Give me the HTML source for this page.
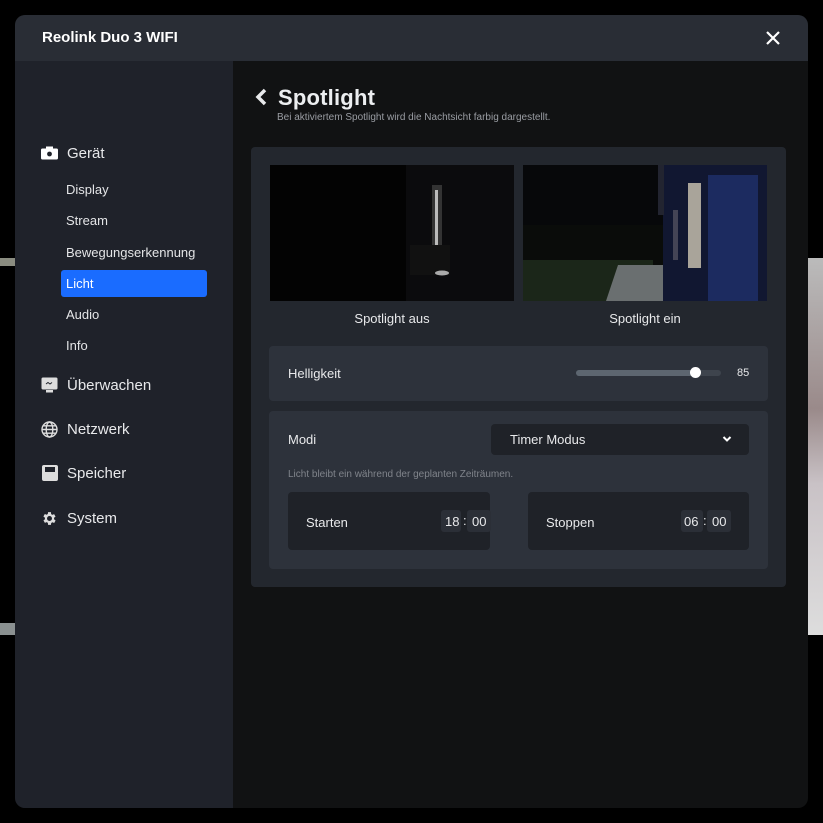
<!DOCTYPE html>
<html><head><meta charset="utf-8"><style>
*{margin:0;padding:0;box-sizing:border-box}
body{width:823px;height:823px;background:#000;font-family:"Liberation Sans",Arial,sans-serif;position:relative;overflow:hidden;color:#e8e9eb}
.abs{position:absolute}
.modal{left:15px;top:15px;width:793px;height:793px;border-radius:10px;overflow:hidden;background:#111213}
.hdr{left:0;top:0;width:793px;height:46px;background:#292d35}
.side{left:0;top:46px;width:218px;height:747px;background:#1f222a}
.t{position:absolute;white-space:nowrap}
.nav{font-size:15px;color:#e8e9eb}
.sub{font-size:13px;color:#e4e5e7}
.card{left:251px;top:147px;width:535px;height:440px;background:#23272e;border-radius:4px}
.panel{background:#2d323b;border-radius:4px;position:absolute}
.dk{background:#1f2228;border-radius:4px;position:absolute}
</style></head><body>
<div class="abs" style="left:808px;top:258px;width:15px;height:377px;background:linear-gradient(#bbb,#9a8a8a 40%,#c9c2c6 60%,#ddd)"></div>
<div class="abs" style="left:0;top:258px;width:15px;height:8px;background:#8a8c80"></div>
<div class="abs" style="left:0;top:623px;width:15px;height:12px;background:#8a9090"></div>
<div class="abs modal">
 <div class="abs hdr"></div>
 <div class="t" style="left:27px;top:14px;font-size:15px;font-weight:bold;color:#fff">Reolink Duo 3 WIFI</div>
 <svg class="abs" style="left:750px;top:15px" width="16" height="16" viewBox="0 0 16 16"><path d="M2 2L14 14M14 2L2 14" stroke="#fff" stroke-width="2.2"/></svg>
 <div class="abs side"></div>
 <svg class="abs" style="left:26px;top:131px" width="17" height="14" viewBox="0 0 17 14"><rect x="0" y="2.5" width="17" height="11" rx="1.5" fill="#fff"/><rect x="5" y="0.5" width="7" height="3" fill="#fff"/><circle cx="8.5" cy="8" r="2.4" fill="#1f222a"/></svg>
 <div class="t nav" style="left:52px;top:130px">Gerät</div>
 <div class="t sub" style="left:51px;top:167px">Display</div>
 <div class="t sub" style="left:51px;top:198px">Stream</div>
 <div class="t sub" style="left:51px;top:230px">Bewegungserkennung</div>
 <div class="abs" style="left:46px;top:255px;width:146px;height:27px;background:#1a6cff;border-radius:3px"></div>
 <div class="t sub" style="left:51px;top:261px;color:#fff">Licht</div>
 <div class="t sub" style="left:51px;top:292px">Audio</div>
 <div class="t sub" style="left:51px;top:323px">Info</div>
 <svg class="abs" style="left:26px;top:362px" width="17" height="16" viewBox="0 0 17 16"><rect x="0.5" y="0.5" width="16" height="12" rx="1.5" fill="#ddd"/><rect x="5" y="13" width="7" height="2.5" fill="#ddd"/><path d="M5 7l2-1.5 2 1.5 2-1.5" stroke="#1f222a" stroke-width="1" fill="none"/></svg>
 <div class="t nav" style="left:52px;top:362px">Überwachen</div>
 <svg class="abs" style="left:26px;top:406px" width="17" height="17" viewBox="0 0 17 17"><g stroke="#ddd" stroke-width="1.4" fill="none"><circle cx="8.5" cy="8.5" r="7.5"/><ellipse cx="8.5" cy="8.5" rx="3.3" ry="7.5"/><path d="M1 8.5h15M2.3 4.8h12.4M2.3 12.2h12.4"/></g></svg>
 <div class="t nav" style="left:52px;top:406px">Netzwerk</div>
 <svg class="abs" style="left:27px;top:450px" width="16" height="16" viewBox="0 0 16 16"><rect x="0" y="0" width="16" height="16" rx="2" fill="#ddd"/><rect x="3" y="2" width="10" height="5" fill="#1f222a"/></svg>
 <div class="t nav" style="left:52px;top:450px">Speicher</div>
 <svg class="abs" style="left:26px;top:495px" width="17" height="17" viewBox="0 0 24 24"><path fill="#ddd" d="M19.4 13a7.5 7.5 0 000-2l2.1-1.6-2-3.5-2.5 1a7.6 7.6 0 00-1.7-1L15 3h-4l-.4 2.7a7.6 7.6 0 00-1.7 1l-2.5-1-2 3.5L6.6 11a7.5 7.5 0 000 2l-2.1 1.6 2 3.5 2.5-1a7.6 7.6 0 001.7 1L11 21h4l.4-2.7a7.6 7.6 0 001.7-1l2.5 1 2-3.5zM13 15.5a3.5 3.5 0 110-7 3.5 3.5 0 010 7z" transform="translate(-1 0)"/></svg>
 <div class="t nav" style="left:52px;top:495px">System</div>
</div>
<svg class="abs" style="left:254px;top:88px" width="14" height="18" viewBox="0 0 14 18"><path d="M11 2L4 9l7 7" stroke="#e8e9eb" stroke-width="3.5" fill="none"/></svg>
<div class="t" style="left:278px;top:85px;font-size:22px;font-weight:bold;color:#eceef0;letter-spacing:0.2px">Spotlight</div>
<div class="t" style="left:277px;top:112px;font-size:10px;color:#9a9da3">Bei aktiviertem Spotlight wird die Nachtsicht farbig dargestellt.</div>
<div class="abs card"></div>
<svg class="abs" style="left:270px;top:165px" width="244" height="136" viewBox="0 0 244 136"><rect width="244" height="136" fill="#030303"/><rect x="136" y="0" width="108" height="136" fill="#0b0b0d"/><rect x="162" y="20" width="10" height="90" fill="#333"/><rect x="165" y="25" width="3" height="80" fill="#bbb"/><rect x="140" y="80" width="40" height="30" fill="#111"/><ellipse cx="172" cy="108" rx="7" ry="2.5" fill="#aaa"/></svg>
<svg class="abs" style="left:523px;top:165px" width="244" height="136" viewBox="0 0 244 136"><rect width="244" height="136" fill="#07080a"/><rect x="0" y="60" width="140" height="40" fill="#0a0c0a"/><rect x="0" y="95" width="130" height="41" fill="#1b2619"/><path d="M95 100h45l18 36h-75z" fill="#6a6f70"/><rect x="140" y="0" width="104" height="136" fill="#111731"/><rect x="185" y="10" width="50" height="126" fill="#1c2b60"/><rect x="165" y="18" width="13" height="85" fill="#a9a49a"/><rect x="150" y="45" width="5" height="50" fill="#445"/><rect x="135" y="0" width="6" height="50" fill="#222430"/></svg>
<div class="t" style="left:270px;top:311px;width:244px;text-align:center;font-size:13px">Spotlight aus</div>
<div class="t" style="left:523px;top:311px;width:244px;text-align:center;font-size:13px">Spotlight ein</div>
<div class="panel" style="left:269px;top:346px;width:499px;height:55px"></div>
<div class="t" style="left:288px;top:366px;font-size:13px">Helligkeit</div>
<div class="abs" style="left:576px;top:370px;width:145px;height:6px;border-radius:3px;background:#3e444d"></div>
<div class="abs" style="left:576px;top:370px;width:120px;height:6px;border-radius:3px;background:#5d6670"></div>
<div class="abs" style="left:690px;top:367px;width:11px;height:11px;border-radius:50%;background:#fff"></div>
<div class="t" style="left:737px;top:367px;font-size:11px">85</div>
<div class="panel" style="left:269px;top:411px;width:499px;height:158px"></div>
<div class="t" style="left:288px;top:432px;font-size:13px">Modi</div>
<div class="dk" style="left:491px;top:424px;width:258px;height:31px"></div>
<div class="t" style="left:510px;top:432px;font-size:13px">Timer Modus</div>
<svg class="abs" style="left:722px;top:435px" width="10" height="8" viewBox="0 0 10 8"><path d="M1.5 2l3.5 3.5L8.5 2" stroke="#fff" stroke-width="2" fill="none"/></svg>
<div class="t" style="left:288px;top:469px;font-size:10px;color:#80848b">Licht bleibt ein während der geplanten Zeiträumen.</div>
<div class="dk" style="left:288px;top:492px;width:202px;height:58px"></div>
<div class="t" style="left:306px;top:515px;font-size:13px">Starten</div>
<div class="abs" style="left:441px;top:510px;width:20px;height:22px;background:#2b2f37;border-radius:3px"></div>
<div class="abs" style="left:467px;top:510px;width:24px;height:22px;background:#2b2f37;border-radius:3px"></div>
<div class="t" style="left:445px;top:514px;font-size:13px">18</div><div class="t" style="left:463px;top:513px;font-size:13px">:</div><div class="t" style="left:472px;top:514px;font-size:13px">00</div>
<div class="dk" style="left:528px;top:492px;width:221px;height:58px"></div>
<div class="t" style="left:546px;top:515px;font-size:13px">Stoppen</div>
<div class="abs" style="left:681px;top:510px;width:22px;height:22px;background:#2b2f37;border-radius:3px"></div>
<div class="abs" style="left:707px;top:510px;width:24px;height:22px;background:#2b2f37;border-radius:3px"></div>
<div class="t" style="left:684px;top:514px;font-size:13px">06</div><div class="t" style="left:703px;top:513px;font-size:13px">:</div><div class="t" style="left:712px;top:514px;font-size:13px">00</div>
</body></html>
